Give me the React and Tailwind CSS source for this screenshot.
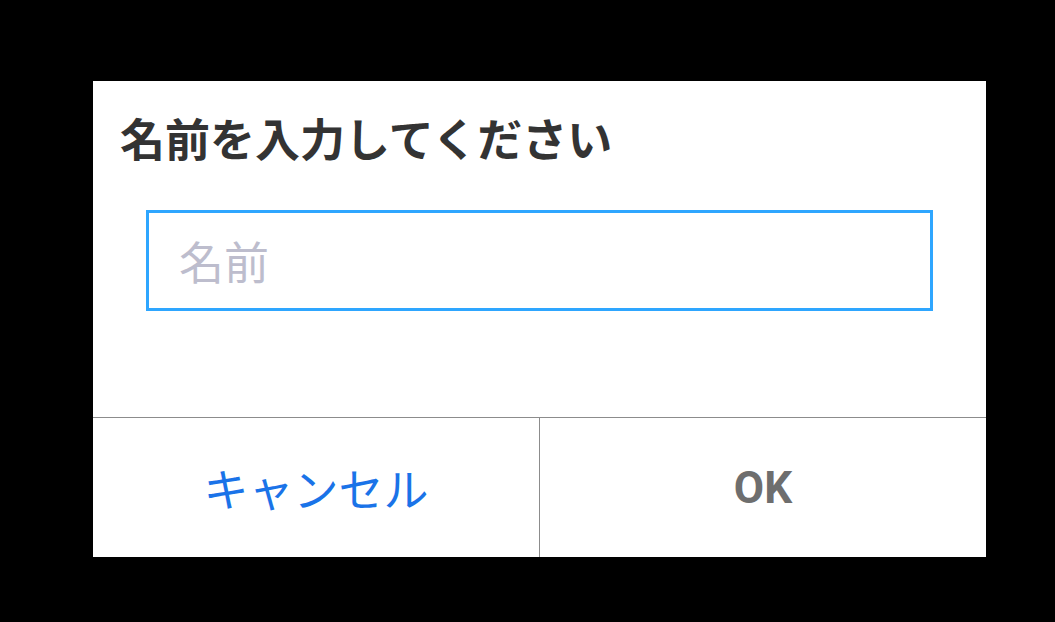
import React from 'react';

const jp = { fontFamily: '"Noto Sans CJK JP", "Noto Sans", sans-serif' };

export default function App() {
  return (
    <div className="w-[1055px] h-[622px] bg-black overflow-hidden pt-[81px] pl-[93px]" style={jp}>
      <div className="w-[893px] bg-white flex flex-col">
        {/* Title */}
        <div className="pt-[27px] pl-[27px]">
          <h1 className="text-[45px] leading-[60px] font-bold text-[#333333]">
            名前を入力してください
          </h1>
        </div>

        {/* Input */}
        <div className="px-[53px] mt-[42px] pb-[106px]">
          <input
            type="text"
            placeholder="名前"
            className="w-full h-[101px] border-[3px] border-[#2ea6ff] outline-none pl-[30px] text-[45px] text-[#333] placeholder:text-[#bdbdcd]"
            style={jp}
          />
        </div>

        {/* Buttons */}
        <div className="flex border-t border-[#8c8c8c] h-[140px]">
          <button className="flex-1 flex items-center justify-center text-[45px] text-[#1a73e8] border-r border-[#8c8c8c]">
            キャンセル
          </button>
          <button
            className="flex-1 flex items-center justify-center text-[44px] font-bold text-[#6e6e6e]"
            style={{ fontFamily: 'Roboto, "Noto Sans", sans-serif' }}
          >
            OK
          </button>
        </div>
      </div>
    </div>
  );
}
